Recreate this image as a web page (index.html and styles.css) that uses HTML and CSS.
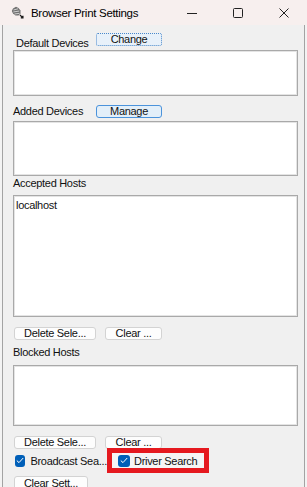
FILE: index.html
```html
<!DOCTYPE html>
<html lang="en">
<head>
  <meta charset="UTF-8" />
  <meta name="viewport" content="width=device-width, initial-scale=1.0" />
  <title>Browser Print Settings</title>
  <link rel="stylesheet" href="styles.css">
</head>
<body>

<div class="window">
  <div class="titlebar">
    <svg class="app-icon" width="13" height="13" viewBox="0 0 13 13">
      <path d="M2 2.5 L5 0.8 L7.5 2 L9.5 4.5 L9.5 7.5 L7.5 9.5 L4.5 9.5 L2 7.5 L0.8 5 Z" fill="#707070"/>
      <path d="M2.5 4 L7 2.8 M2.3 6 L8.3 5 M3.5 8 L8.5 7.3" stroke="#e6e6e6" stroke-width="0.8"/>
      <path d="M9 9 L11.6 11.6 M9.8 11.9 L11.9 11.9 L11.9 9.8" stroke="#1a1a1a" stroke-width="1.3" fill="none"/>
    </svg>
    <span class="title">Browser Print Settings</span>
    <div class="controls">
      <span class="ctl">
        <svg width="10" height="10" viewBox="0 0 10 10"><path d="M0 5.5 H10" stroke="#222" stroke-width="1"/></svg>
      </span>
      <span class="ctl">
        <svg width="10" height="10" viewBox="0 0 10 10"><rect x="0.5" y="0.5" width="9" height="9" rx="1" fill="none" stroke="#222" stroke-width="1"/></svg>
      </span>
      <span class="ctl">
        <svg width="10" height="10" viewBox="0 0 10 10"><path d="M0.5 0.5 L9.5 9.5 M9.5 0.5 L0.5 9.5" stroke="#222" stroke-width="1"/></svg>
      </span>
    </div>
  </div>

  <div class="client">
    <div class="head head-first">
      <span class="label label-default">Default Devices</span>
      <button type="button" class="btn btn-focus">Change</button>
    </div>
    <div class="list list-default"></div>

    <div class="head head-added">
      <span class="label">Added Devices</span>
      <button type="button" class="btn btn-hover">Manage</button>
    </div>
    <div class="list list-added"></div>

    <div class="label section-label">Accepted Hosts</div>
    <div class="list list-accepted">
      <div class="item">localhost</div>
    </div>
    <div class="actions">
      <button type="button" class="btn btn-delete">Delete Sele...</button>
      <button type="button" class="btn btn-clear">Clear ...</button>
    </div>

    <div class="label section-label blocked-label">Blocked Hosts</div>
    <div class="list list-blocked"></div>
    <div class="actions">
      <button type="button" class="btn btn-delete">Delete Sele...</button>
      <button type="button" class="btn btn-clear">Clear ...</button>
    </div>

    <div class="checks">
      <label class="check">
        <span class="box"><svg width="8" height="7" viewBox="0 0 8 7"><path d="M0.8 3.6 L3 5.6 L7.2 1" stroke="#fff" stroke-width="1" fill="none"/></svg></span>
        Broadcast Sea...
      </label>
      <label class="check check-marked">
        <span class="box"><svg width="8" height="7" viewBox="0 0 8 7"><path d="M0.8 3.6 L3 5.6 L7.2 1" stroke="#fff" stroke-width="1" fill="none"/></svg></span>
        Driver Search
      </label>
    </div>

    <div class="footer">
      <button type="button" class="btn btn-reset">Clear Sett...</button>
    </div>
  </div>
</div>

</body>
</html>
```

FILE: styles.css
```css
html, body {
  margin: 0;
  padding: 0;
  height: 100%;
  font-family: "Liberation Sans", Arial, sans-serif;
  font-size: 11px;
  letter-spacing: -0.3px;
  color: #111;
  background: #f3f3f3;
  overflow: hidden;
}
.window {
  display: flex;
  flex-direction: column;
  width: 307px;
  height: 487px;
}
.titlebar {
  display: flex;
  align-items: center;
  height: 25px;
  flex-shrink: 0;
  background: #f7efee;
}
.app-icon {
  margin-left: 11px;
  margin-top: -1px;
}
.title {
  margin-left: 7px;
  font-size: 11.5px;
  color: #000;
}
.controls {
  display: flex;
  margin-left: auto;
  height: 100%;
}
.ctl {
  display: flex;
  align-items: center;
  justify-content: center;
  width: 46px;
  height: 100%;
}
.client {
  flex: 1;
  margin: 0 2px;
  padding: 0 6px 0 10px;
  border-left: 1px solid #a3a3a3;
  border-right: 1px solid #a3a3a3;
  background: #f0f0f0;
  overflow: hidden;
}
.head {
  display: grid;
  grid-template-columns: 83px auto;
  justify-content: start;
}
.head-first {
  height: 17px;
  margin-top: 8px;
}
.head-first .btn {
  align-self: start;
}
.head-first .label {
  align-self: end;
}
.head-added {
  height: 13px;
  margin-top: 9px;
  margin-bottom: 3px;
  align-items: center;
}
.label {
  line-height: 13px;
  white-space: nowrap;
}
.label-default {
  padding-left: 3px;
}
.section-label {
  margin: 1px 0 5px;
}
.blocked-label {
  margin: 6px 0 6px;
}
.list {
  background: #fff;
  border: 1px solid #a9a9a9;
  box-shadow: inset 0 0 0 1px #e4e4e4;
  box-sizing: border-box;
}
.list-default {
  height: 46px;
}
.list-added {
  height: 55px;
}
.list-accepted {
  height: 122px;
}
.list-blocked {
  height: 61px;
}
.item {
  padding: 3px 0 0 2px;
  line-height: 13px;
}
.btn {
  height: 13px;
  padding: 0;
  box-sizing: border-box;
  font-family: inherit;
  font-size: 11px;
  letter-spacing: -0.3px;
  line-height: 11px;
  color: #111;
  background: #fdfdfd;
  border: 1px solid #d3d3d3;
  border-radius: 3px;
}
.btn-focus {
  width: 66px;
  background: #e8f1fa;
  border: 1px dotted #4a88c9;
  border-radius: 2px;
}
.btn-hover {
  width: 66px;
  background: #e3eff9;
  border: 1px solid #4b93db;
}
.actions {
  display: flex;
  gap: 9px;
  margin-top: 10px;
  padding-left: 1px;
}
.btn-delete {
  width: 82px;
}
.btn-clear {
  width: 57px;
}
.checks {
  display: flex;
  align-items: center;
  height: 25px;
  margin-top: -1px;
}
.check {
  display: flex;
  align-items: center;
  gap: 5px;
  white-space: nowrap;
}
.check:first-child {
  padding-left: 2px;
  width: 92px;
}
.check-marked {
  height: 25px;
  box-sizing: border-box;
  width: 102px;
  padding-left: 6px;
  border: 5px solid #e5191f;
  background: #f5f5f5;
  gap: 4px;
}
.box {
  display: flex;
  align-items: center;
  justify-content: center;
  width: 12px;
  height: 12px;
  border-radius: 3px;
  background: #005fb8;
}
.footer {
  margin-top: 3px;
  padding-left: 1px;
}
.btn-reset {
  width: 74px;
  height: 14px;
}
```
